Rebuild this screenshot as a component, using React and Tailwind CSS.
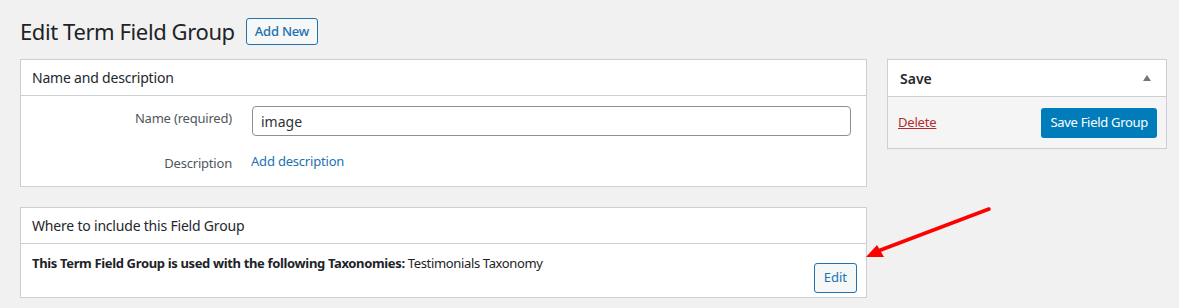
const font = { fontFamily: '"Noto Sans", "Open Sans", sans-serif' };

const App = () => {
  return (
    <div className="relative w-[1179px] h-[308px] bg-[#f1f1f1] text-[#1d2327] overflow-hidden" style={font}>
      {/* Heading */}
      <div className="flex items-center gap-[11px] pl-[20px] pt-[16px] h-[47px]">
        <h1 className="text-[22px] leading-[29px] font-normal text-[#1d2327] tracking-[-0.4px]">Edit Term Field Group</h1>
        <button className="h-[27px] px-[8px] border border-[#2271b1] rounded-[3px] bg-[#f6f7f7] text-[#2271b1] text-[13px] font-medium leading-none tracking-[-0.2px]">
          Add New
        </button>
      </div>

      <div className="flex gap-[20px] pl-[20px] pt-[12px]">
        {/* Main column */}
        <div className="w-[847px] flex flex-col gap-[20px]">
          {/* Name and description */}
          <div className="bg-white border border-[#ccd0d4]">
            <div className="h-[36px] flex items-center px-[11px] border-b border-[#ccd0d4] text-[14px] text-[#23282d] tracking-[-0.2px]">
              Name and description
            </div>
            <div className="pt-[10px] pb-[8px]">
              <div className="flex items-center h-[30px]">
                <div className="w-[211px] text-right text-[13px] text-[#50575e] -mt-[4px] tracking-[-0.2px]">
                  Name <span className="text-[#50575e]">(required)</span>
                </div>
                <input
                  readOnly
                  value="image"
                  className="ml-[20px] w-[599px] h-[30px] border border-[#8c8f94] rounded-[4px] px-[8px] text-[14px] text-[#2c3338] outline-none"
                  style={font}
                />
              </div>
              <div className="flex items-center h-[30px] mt-[12px]">
                <div className="w-[211px] text-right text-[13px] text-[#50575e] mt-[2px] tracking-[-0.2px]">Description</div>
                <a className="ml-[19px] text-[13px] text-[#2271b1] -mt-[2px] tracking-[-0.2px]">Add description</a>
              </div>
            </div>
          </div>

          {/* Where to include */}
          <div className="bg-white border border-[#ccd0d4]">
            <div className="h-[36px] flex items-center px-[11px] border-b border-[#ccd0d4] text-[14px] text-[#23282d] tracking-[-0.2px]">
              Where to include this Field Group
            </div>
            <div className="flex justify-between px-[11px] pt-[10px] h-[53px]">
              <p className="text-[13px] text-[#1d2327] tracking-[-0.35px]">
                <strong className="font-bold">This Term Field Group is used with the following Taxonomies:</strong> Testimonials Taxonomy
              </p>
              <button className="mt-[9px] -mr-[2px] h-[30px] px-[9px] border border-[#2271b1] rounded-[3px] bg-[#f6f7f7] text-[#2271b1] text-[13px] self-start">
                Edit
              </button>
            </div>
          </div>
        </div>

        {/* Sidebar */}
        <div className="w-[280px] self-start bg-white border border-[#ccd0d4]">
          <div className="h-[37px] flex items-center justify-between pl-[12px] pr-[12px] border-b border-[#ccd0d4]">
            <span className="text-[14px] font-semibold text-[#23282d]">Save</span>
            <svg width="10" height="8" viewBox="0 0 10 8" className="mr-[2px]">
              <polygon points="5,1 9,7 1,7" fill="#72777c" />
            </svg>
          </div>
          <div className="bg-[#f5f5f5] flex items-center justify-between pl-[10px] pr-[9px] h-[51px]">
            <a className="text-[13px] text-[#b32d2e] underline tracking-[-0.2px]">Delete</a>
            <button className="h-[30px] px-[9px] rounded-[3px] bg-[#007cba] text-white text-[13px] tracking-[-0.3px]">
              Save Field Group
            </button>
          </div>
        </div>
      </div>

      {/* Annotation arrow */}
      <svg className="absolute left-0 top-0 pointer-events-none" width="1179" height="308">
        <line x1="989" y1="209" x2="878" y2="251" stroke="#ff0000" strokeWidth="3.5" strokeLinecap="round" />
        <polygon points="866,257 877,245 884,257" fill="#ff0000" />
      </svg>
    </div>
  );
};

export default App;
